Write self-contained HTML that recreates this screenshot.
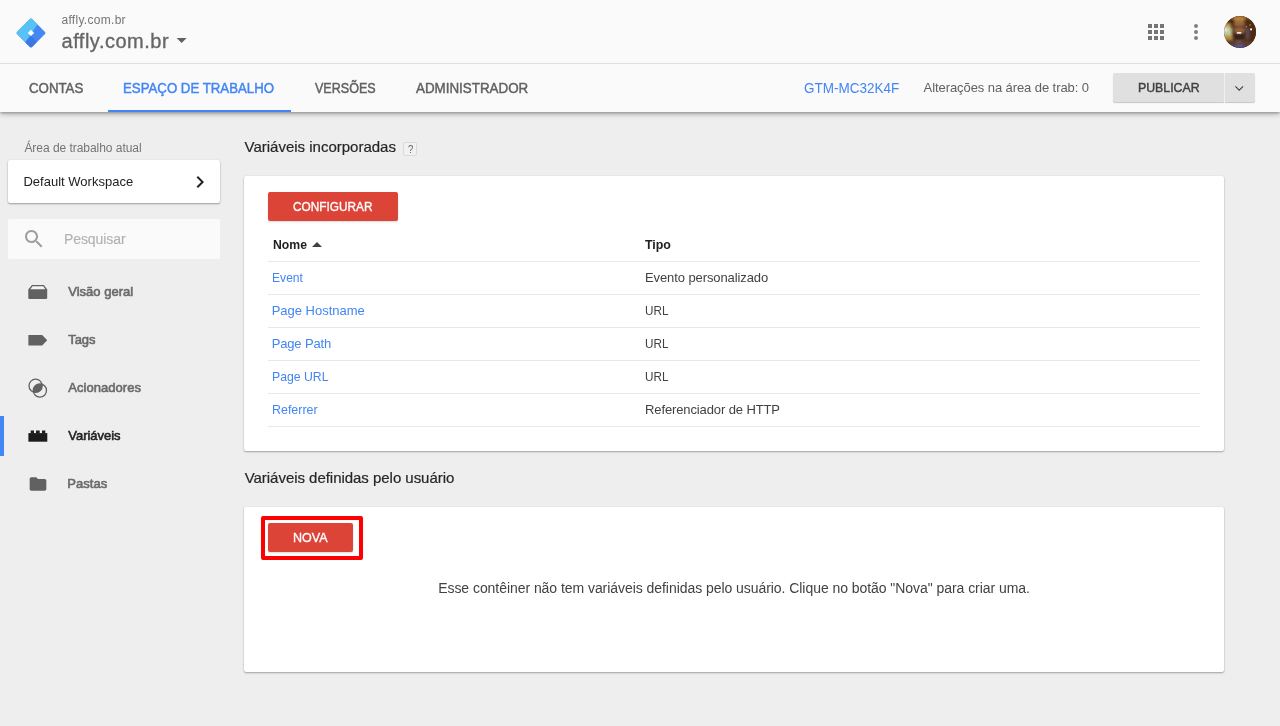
<!DOCTYPE html>
<html lang="pt-BR">
<head>
<meta charset="utf-8">
<title>Google Tag Manager</title>
<style>
html,body{margin:0;padding:0;}
body{width:1280px;height:726px;overflow:hidden;background:#eeeeee;position:relative;font-family:"Liberation Sans",sans-serif;}
.abs{position:absolute;}
.t{position:absolute;white-space:nowrap;font-family:"Liberation Sans",sans-serif;}
#hdr{left:0;top:0;width:1280px;height:63px;background:#fafafa;}
#hline{left:0;top:63px;width:1280px;height:1px;background:#dfdfdf;}
#nav{left:0;top:64px;width:1280px;height:48px;background:#fafafa;box-shadow:0 2px 5px rgba(0,0,0,.30),0 1px 2px rgba(0,0,0,.18);}
#uline{left:108px;top:110px;width:183px;height:2px;background:#4285f4;}
.card{background:#fff;border-radius:2px;box-shadow:0 1px 2px rgba(0,0,0,.32),0 0 1px rgba(0,0,0,.12);}
.rbtn{background:#db4437;border-radius:2px;box-shadow:0 1px 2px rgba(0,30,40,.16);}
.gbtn{background:#e0e0e0;box-shadow:0 1px 1px rgba(0,0,0,.22);}
.row{left:268px;width:932px;height:1px;background:#e8e8e8;}
</style>
</head>
<body>
<!-- top header -->
<div id="nav" class="abs"></div>
<div id="uline" class="abs"></div>
<div id="hdr" class="abs"></div>
<div id="hline" class="abs"></div>

<!-- logo -->
<svg class="abs" style="left:14px;top:16px;" width="34" height="34" viewBox="0 0 726 726">
  <defs><clipPath id="dm"><rect x="-228" y="-228" width="456" height="456" rx="40" ry="40" transform="translate(363 362) rotate(45)"/></clipPath></defs>
  <g clip-path="url(#dm)">
    <rect x="0" y="0" width="726" height="726" fill="#4688f2"/>
    <polygon points="362,0 534,126 240,560 0,560 0,0" fill="#56c2f6"/>
    <polygon points="240,560 365,432 492,548 365,726 300,726" fill="#3c78e3"/>
  </g>
  <polygon points="362,293 430,361 362,429 294,361" fill="#ffffff"/>
</svg>
<!-- caret -->
<svg class="abs" style="left:176px;top:37px;" width="12" height="8" viewBox="0 0 12 8"><polygon points="0.6,1 10.6,1 5.6,6" fill="#616161"/></svg>

<!-- apps grid -->
<svg class="abs" style="left:1148px;top:24px;" width="16" height="16" viewBox="0 0 16 16" fill="#757575">
  <rect x="0" y="0" width="4" height="4"/><rect x="6" y="0" width="4" height="4"/><rect x="12" y="0" width="4" height="4"/>
  <rect x="0" y="6" width="4" height="4"/><rect x="6" y="6" width="4" height="4"/><rect x="12" y="6" width="4" height="4"/>
  <rect x="0" y="12" width="4" height="4"/><rect x="6" y="12" width="4" height="4"/><rect x="12" y="12" width="4" height="4"/>
</svg>
<!-- more dots -->
<svg class="abs" style="left:1192px;top:22px;" width="8" height="20" viewBox="0 0 8 20" fill="#808080">
  <circle cx="4" cy="4" r="2"/><circle cx="4" cy="10" r="2"/><circle cx="4" cy="16" r="2"/>
</svg>
<!-- avatar -->
<svg class="abs" style="left:1224px;top:16px;" width="32" height="32" viewBox="0 0 32 32">
  <defs>
    <clipPath id="av"><circle cx="16" cy="16" r="16"/></clipPath>
    <filter id="bl" x="-30%" y="-30%" width="160%" height="160%"><feGaussianBlur stdDeviation="0.8"/></filter>
    <filter id="bl2" x="-30%" y="-30%" width="160%" height="160%"><feGaussianBlur stdDeviation="0.5"/></filter>
  </defs>
  <g clip-path="url(#av)">
    <rect width="32" height="32" fill="#58301c"/>
    <g filter="url(#bl)">
      <rect x="-2" y="-2" width="36" height="5.5" fill="#80502a"/>
      <rect x="3" y="3" width="7" height="5" fill="#4a2a18"/>
      <rect x="22" y="3" width="12" height="26" fill="#4e2a18"/>
      <rect x="22" y="12" width="3.4" height="11" fill="#5a4c50"/>
      <rect x="-1" y="7.5" width="7.5" height="4.5" fill="#c8a450"/>
      <rect x="-1" y="11.5" width="8.8" height="8.5" fill="#b4cba4"/>
      <rect x="0" y="12.2" width="3.5" height="3.2" fill="#f2f0e0"/>
      <rect x="3.5" y="15" width="4" height="3.5" fill="#c4c890"/>
      <rect x="-1" y="19.5" width="9.5" height="4.5" fill="#b48c40"/>
      <path d="M-2 32 L-2 26 Q5 22.5 11 24.5 L21 24.5 Q28 24.5 34 29 L34 32 Z" fill="#5c3e2c"/>
      <ellipse cx="15.3" cy="12.5" rx="6.6" ry="10.5" fill="#6e4228"/>
      <ellipse cx="15.3" cy="3.0" rx="6.0" ry="2.6" fill="#b8863c"/>
      <ellipse cx="15.3" cy="7.4" rx="5.0" ry="2.8" fill="#98683e"/>
      <rect x="10.4" y="10" width="9.8" height="1.8" fill="#5a3824"/>
      <ellipse cx="15.3" cy="14.2" rx="5.0" ry="2.6" fill="#94643e"/>
      <path d="M9.2 14 Q9 24 15.3 24.3 Q21.6 24 21.4 14 Q20.5 18 18.6 18.6 L12 18.6 Q10 18 9.2 14 Z" fill="#2e1c16"/>
      <ellipse cx="15.2" cy="20.8" rx="4.6" ry="3.0" fill="#32201a"/>
      <ellipse cx="14.8" cy="25.6" rx="3.0" ry="1.4" fill="#86563a"/>
      <path d="M7 32 L10.5 27 L14.5 28.8 L19 27 L23.5 32 Z" fill="#474070"/>
      <rect x="12" y="29.4" width="7" height="1.0" fill="#8484ac"/>
    </g>
    <g filter="url(#bl2)">
      <rect x="12.7" y="16" width="4.8" height="1.7" rx="0.8" fill="#eee2d8"/>
      <circle cx="27.1" cy="13.4" r="1.05" fill="#fbf3e6"/>
      <circle cx="22.4" cy="10.6" r="0.7" fill="#cfa088"/>
      <circle cx="26" cy="9" r="0.8" fill="#b09a30"/>
    </g>
  </g>
</svg>

<!-- publish -->
<div class="abs gbtn" style="left:1113px;top:73px;width:111px;height:29px;border-radius:2px 0 0 2px;"></div>
<div class="abs gbtn" style="left:1225px;top:73px;width:30px;height:29px;border-radius:0 2px 2px 0;"></div>
<svg class="abs" style="left:1233px;top:84px;" width="12" height="8" viewBox="0 0 12 8"><polyline points="2.4,2.3 6.25,6.1 10.1,2.3" fill="none" stroke="#424242" stroke-width="1.15"/></svg>

<!-- sidebar -->
<div class="abs" style="left:8px;top:160px;width:212px;height:43px;background:#fff;border-radius:2px;box-shadow:0 1px 2px rgba(0,0,0,.35),0 0 1px rgba(0,0,0,.1);"></div>
<svg class="abs" style="left:188px;top:169.5px;" width="24" height="24" viewBox="0 0 24 24"><path d="M10 6L8.59 7.41 13.17 12l-4.58 4.59L10 18l6-6z" fill="#212121"/></svg>
<div class="abs" style="left:8px;top:219px;width:212px;height:40px;background:#fafafa;border-radius:2px;"></div>
<svg class="abs" style="left:22px;top:227px;" width="24" height="24" viewBox="0 0 24 24"><path fill="#9e9e9e" d="M15.5 14h-.79l-.28-.27C15.41 12.59 16 11.11 16 9.5 16 5.91 13.09 3 9.5 3S3 5.91 3 9.5 5.91 16 9.5 16c1.61 0 3.09-.59 4.23-1.57l.27.28v.79l5 4.99L20.49 19l-4.99-5zm-6 0C7.01 14 5 11.99 5 9.5S7.01 5 9.5 5 14 7.01 14 9.5 11.99 14 9.5 14z"/></svg>

<!-- sidebar icons -->
<!-- overview -->
<svg class="abs" style="left:26px;top:282px;" width="24" height="20" viewBox="0 0 24 20">
  <path d="M2.3 7.6 L5.9 3 L17.9 3 L21.2 7.6 L21.2 16 Q21.2 17 20.2 17 L3.3 17 Q2.3 17 2.3 16 Z" fill="#616161"/>
  <path d="M4.4 7.2 L6.5 4.3 L17.3 4.3 L19.3 7.2 Z" fill="#f4f4f4"/>
</svg>
<!-- tags -->
<svg class="abs" style="left:26px;top:330px;" width="24" height="20" viewBox="0 0 24 20">
  <path d="M2.4 5 L16.2 5 L21.2 10.3 L16.2 15.6 L2.4 15.6 Z" fill="#616161"/>
</svg>
<!-- triggers -->
<svg class="abs" style="left:26px;top:376px;" width="24" height="24" viewBox="0 0 24 24">
  <defs><clipPath id="c1"><circle cx="9.6" cy="9.8" r="6.6"/></clipPath></defs>
  <circle cx="13.9" cy="14.5" r="6.6" fill="#616161" clip-path="url(#c1)"/>
  <circle cx="9.6" cy="9.8" r="6.6" fill="none" stroke="#616161" stroke-width="1.3"/>
  <circle cx="13.9" cy="14.5" r="6.6" fill="none" stroke="#616161" stroke-width="1.3"/>
</svg>
<!-- variables -->
<div class="abs" style="left:0;top:416px;width:4px;height:40px;background:#4285f4;"></div>
<svg class="abs" style="left:26px;top:426px;" width="24" height="20" viewBox="0 0 24 20" fill="#1c1c1c">
  <rect x="2.4" y="7.1" width="18.9" height="8.6"/>
  <rect x="4.7" y="4.5" width="3.3" height="3"/><rect x="10" y="4.5" width="3.7" height="3"/><rect x="16" y="4.5" width="3.3" height="3"/>
</svg>
<!-- folders -->
<svg class="abs" style="left:28px;top:474px;" width="20" height="20" viewBox="0 0 24 24"><path fill="#616161" d="M10 4H4c-1.1 0-1.99.9-1.99 2L2 18c0 1.1.9 2 2 2h16c1.1 0 2-.9 2-2V8c0-1.1-.9-2-2-2h-8l-2-2z"/></svg>

<!-- main cards -->
<div class="abs card" style="left:244px;top:176px;width:980px;height:275px;"></div>
<div class="abs card" style="left:244px;top:507px;width:980px;height:165px;"></div>
<!-- help box -->
<div class="abs" style="left:403px;top:142px;width:12px;height:12px;border:1px solid #dadada;border-radius:2px;background:#f1f1f1;"></div>
<!-- buttons -->
<div class="abs rbtn" style="left:268px;top:192px;width:130px;height:29px;"></div>
<div class="abs" style="left:261px;top:516px;width:94px;height:36px;border:4px solid #ff0000;border-radius:2px;"></div>
<div class="abs rbtn" style="left:268px;top:523px;width:85px;height:29px;"></div>
<!-- sort arrow -->
<svg class="abs" style="left:311px;top:241px;" width="12" height="8" viewBox="0 0 12 8"><polygon points="1,6 11,6 6,1" fill="#424242"/></svg>
<!-- table lines -->
<div class="abs row" style="top:261px;"></div>
<div class="abs row" style="top:294px;"></div>
<div class="abs row" style="top:327px;"></div>
<div class="abs row" style="top:360px;"></div>
<div class="abs row" style="top:393px;"></div>
<div class="abs row" style="top:426px;"></div>

<!-- texts -->
<div id="tx" style="position:absolute;left:0;top:0;width:1280px;height:726px;will-change:transform;">
<span class="t" style="left:61.50px;top:13.84px;font-size:12px;line-height:12px;color:#757575;letter-spacing:0.290px;">affly.com.br</span>
<span class="t" style="left:61.50px;top:31.07px;font-size:20px;line-height:20px;color:#666666;letter-spacing:0.513px;-webkit-text-stroke:0.35px #666666;">affly.com.br</span>
<span class="t" style="left:29.00px;top:81.15px;font-size:14px;line-height:14px;color:#616161;letter-spacing:0.000px;-webkit-text-stroke:0.45px #616161;transform:scaleX(0.9480);transform-origin:0 0;">CONTAS</span>
<span class="t" style="left:123.45px;top:81.15px;font-size:14px;line-height:14px;color:#4285f4;letter-spacing:0.000px;-webkit-text-stroke:0.45px #4285f4;transform:scaleX(0.9452);transform-origin:0 0;">ESPAÇO DE TRABALHO</span>
<span class="t" style="left:315.00px;top:81.15px;font-size:14px;line-height:14px;color:#616161;letter-spacing:0.000px;-webkit-text-stroke:0.45px #616161;transform:scaleX(0.8968);transform-origin:0 0;">VERSÕES</span>
<span class="t" style="left:416.25px;top:81.15px;font-size:14px;line-height:14px;color:#616161;letter-spacing:0.000px;-webkit-text-stroke:0.45px #616161;transform:scaleX(0.9558);transform-origin:0 0;">ADMINISTRADOR</span>
<span class="t" style="left:804.40px;top:81.15px;font-size:14px;line-height:14px;color:#4285f4;letter-spacing:0.000px;transform:scaleX(0.9630);transform-origin:0 0;">GTM-MC32K4F</span>
<span class="t" style="left:923.60px;top:81.00px;font-size:13px;line-height:13px;color:#616161;letter-spacing:-0.081px;">Alterações na área de trab: 0</span>
<span class="t" style="left:1137.95px;top:81.00px;font-size:13px;line-height:13px;color:#424242;letter-spacing:0.000px;-webkit-text-stroke:0.45px #424242;transform:scaleX(0.9477);transform-origin:0 0;">PUBLICAR</span>
<span class="t" style="left:24.40px;top:141.84px;font-size:12px;line-height:12px;color:#757575;letter-spacing:-0.039px;">Área de trabalho atual</span>
<span class="t" style="left:23.40px;top:175.00px;font-size:13px;line-height:13px;color:#212121;letter-spacing:0.015px;">Default Workspace</span>
<span class="t" style="left:63.90px;top:232.15px;font-size:14px;line-height:14px;color:#b2b2b2;letter-spacing:-0.062px;-webkit-text-stroke:0.15px #b2b2b2;">Pesquisar</span>
<span class="t" style="left:68.30px;top:285.00px;font-size:13px;line-height:13px;color:#6a6a6a;letter-spacing:-0.002px;-webkit-text-stroke:0.6px #6a6a6a;">Visão geral</span>
<span class="t" style="left:68.30px;top:333.00px;font-size:13px;line-height:13px;color:#6a6a6a;letter-spacing:-0.087px;-webkit-text-stroke:0.6px #6a6a6a;">Tags</span>
<span class="t" style="left:68.30px;top:381.00px;font-size:13px;line-height:13px;color:#6a6a6a;letter-spacing:0.033px;-webkit-text-stroke:0.6px #6a6a6a;">Acionadores</span>
<span class="t" style="left:68.30px;top:429.00px;font-size:13px;line-height:13px;color:#212121;letter-spacing:-0.038px;-webkit-text-stroke:0.55px #212121;">Variáveis</span>
<span class="t" style="left:67.30px;top:477.00px;font-size:13px;line-height:13px;color:#6a6a6a;letter-spacing:0.051px;-webkit-text-stroke:0.6px #6a6a6a;">Pastas</span>
<span class="t" style="left:244.60px;top:139.30px;font-size:15px;line-height:15px;color:#262626;letter-spacing:-0.008px;-webkit-text-stroke:0.2px #262626;">Variáveis incorporadas</span>
<span class="t" style="left:408.00px;top:143.69px;font-size:11px;line-height:11px;color:#616161;letter-spacing:0.000px;transform:scaleX(0.8667);transform-origin:0 0;">?</span>
<span class="t" style="left:293.30px;top:200.00px;font-size:13px;line-height:13px;color:#ffffff;letter-spacing:0.000px;-webkit-text-stroke:0.35px #ffffff;transform:scaleX(0.9103);transform-origin:0 0;">CONFIGURAR</span>
<span class="t" style="left:272.70px;top:238.00px;font-size:13px;line-height:13px;color:#212121;letter-spacing:0.000px;font-weight:700;transform:scaleX(0.9390);transform-origin:0 0;">Nome</span>
<span class="t" style="left:645.00px;top:238.00px;font-size:13px;line-height:13px;color:#212121;letter-spacing:0.000px;font-weight:700;transform:scaleX(0.9538);transform-origin:0 0;">Tipo</span>
<span class="t" style="left:271.77px;top:271.00px;font-size:13px;line-height:13px;color:#4285f4;letter-spacing:0.000px;transform:scaleX(0.9316);transform-origin:0 0;">Event</span>
<span class="t" style="left:271.70px;top:304.00px;font-size:13px;line-height:13px;color:#4285f4;letter-spacing:-0.016px;">Page Hostname</span>
<span class="t" style="left:271.70px;top:337.00px;font-size:13px;line-height:13px;color:#4285f4;letter-spacing:-0.148px;">Page Path</span>
<span class="t" style="left:271.76px;top:370.00px;font-size:13px;line-height:13px;color:#4285f4;letter-spacing:0.000px;transform:scaleX(0.9413);transform-origin:0 0;">Page URL</span>
<span class="t" style="left:271.74px;top:403.00px;font-size:13px;line-height:13px;color:#4285f4;letter-spacing:0.000px;transform:scaleX(0.9567);transform-origin:0 0;">Referrer</span>
<span class="t" style="left:645.00px;top:271.00px;font-size:13px;line-height:13px;color:#424242;letter-spacing:-0.095px;">Evento personalizado</span>
<span class="t" style="left:645.10px;top:304.00px;font-size:13px;line-height:13px;color:#424242;letter-spacing:0.000px;transform:scaleX(0.9001);transform-origin:0 0;">URL</span>
<span class="t" style="left:645.10px;top:337.00px;font-size:13px;line-height:13px;color:#424242;letter-spacing:0.000px;transform:scaleX(0.9001);transform-origin:0 0;">URL</span>
<span class="t" style="left:645.10px;top:370.00px;font-size:13px;line-height:13px;color:#424242;letter-spacing:0.000px;transform:scaleX(0.9001);transform-origin:0 0;">URL</span>
<span class="t" style="left:645.00px;top:403.00px;font-size:13px;line-height:13px;color:#424242;letter-spacing:-0.115px;">Referenciador de HTTP</span>
<span class="t" style="left:244.70px;top:470.30px;font-size:15px;line-height:15px;color:#262626;letter-spacing:-0.034px;-webkit-text-stroke:0.2px #262626;">Variáveis definidas pelo usuário</span>
<span class="t" style="left:292.54px;top:531.00px;font-size:13px;line-height:13px;color:#ffffff;letter-spacing:0.000px;-webkit-text-stroke:0.35px #ffffff;transform:scaleX(0.9629);transform-origin:0 0;">NOVA</span>
<span class="t" style="left:438.20px;top:581.15px;font-size:14px;line-height:14px;color:#424242;letter-spacing:-0.053px;">Esse contêiner não tem variáveis definidas pelo usuário. Clique no botão &quot;Nova&quot; para criar uma.</span>
</div>
</body>
</html>
